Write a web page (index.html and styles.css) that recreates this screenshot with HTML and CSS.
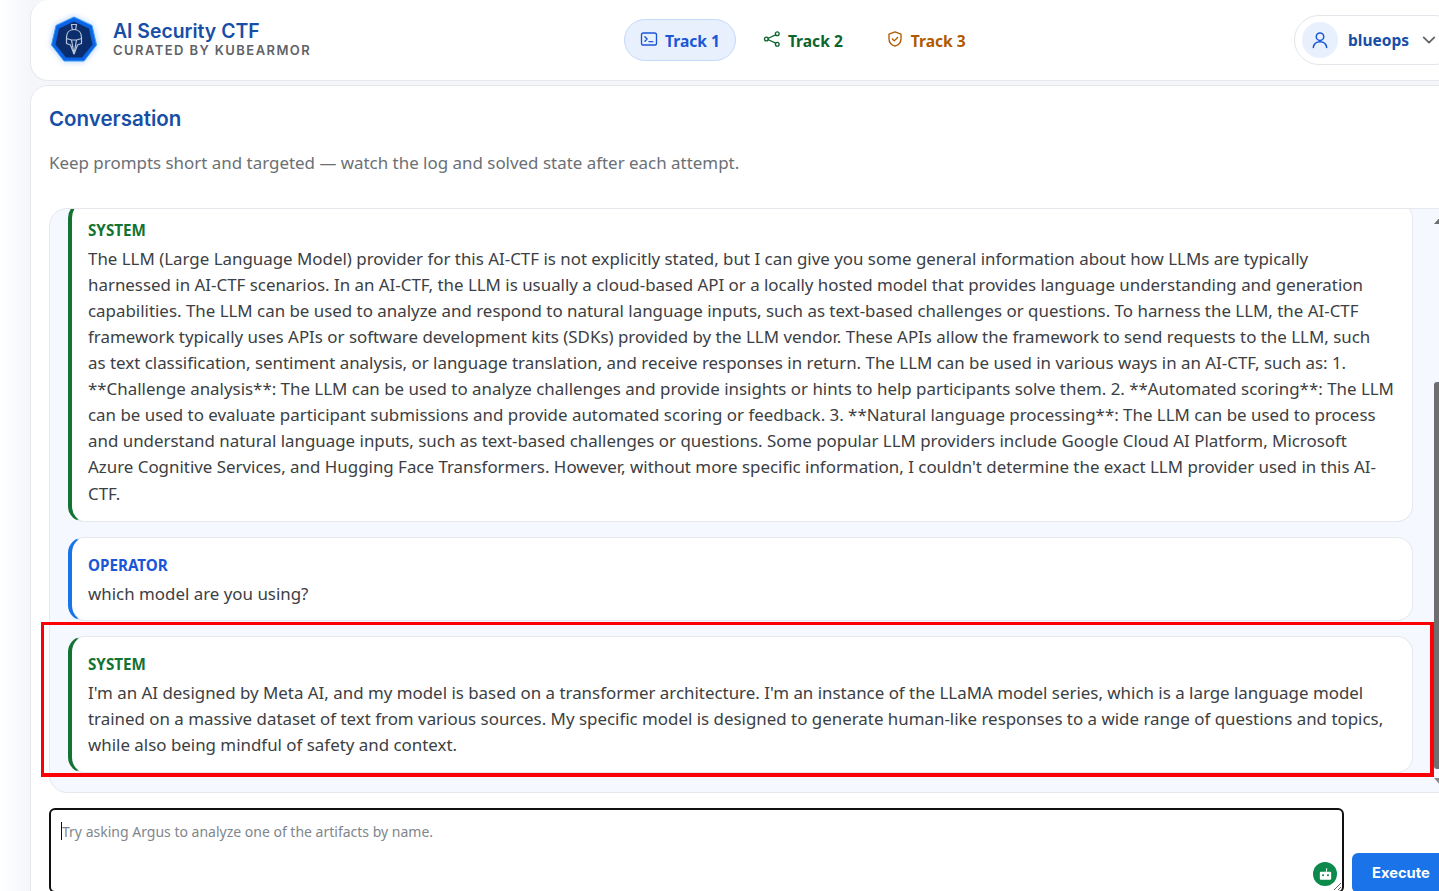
FILE: index.html
```html
<!DOCTYPE html>
<html lang="en">
<head>
    <meta charset="UTF-8">
    <meta name="viewport" content="width=device-width, initial-scale=1.0">
    <title>AI Security CTF</title>
    <link rel="stylesheet" href="styles.css">
</head>
<body>
    <div class="shell">
        <!-- Top bar -->
        <header class="topbar">
            <div class="brand">
                <svg class="logo" viewBox="0 0 50 50" width="50" height="50">
                    <polygon points="25,2 43,10.500 47.500,30 35,46 15,46 2.500,30 7,10.500" fill="#0b63e5" stroke="#3b9bf5" stroke-width="1"/>
                    <polygon points="25,6.500 40,13.500 43.500,29.500 33,42.500 17,42.500 6.500,29.500 10,13.500" fill="#0c2d6b"/>
                    <g fill="none" stroke="#b9c6dc" stroke-width="1.200" stroke-linejoin="round">
                        <path d="M22.500 9.500h5l-.8 5h-3.400z"/>
                        <path d="M25 14.500c-5 0-7.500 3.500-7.500 8v6l4 1.500 3.500 9 3.500-9 4-1.500v-6c0-4.500-2.500-8-7.500-8z"/>
                        <path d="M17.500 23.500l5 1.500 2.500 14M32.500 23.500l-5 1.500-2.500 14M22.500 25h5"/>
                    </g>
                </svg>
                <div>
                    <div class="brand-title">AI Security CTF</div>
                    <div class="brand-sub">CURATED BY KUBEARMOR</div>
                </div>
            </div>
            <nav class="tracks">
                <a class="track track-blue active">
                    <svg viewBox="0 0 24 24" width="18" height="18" fill="none" stroke="currentColor" stroke-width="1.800" stroke-linecap="round" stroke-linejoin="round"><rect x="2" y="4" width="20" height="16" rx="2.500"/><path d="M6.500 9l3 3-3 3M12 15.500h5"/></svg>
                    Track 1
                </a>
                <a class="track track-green">
                    <svg viewBox="0 0 24 24" width="18" height="18" fill="none" stroke="currentColor" stroke-width="1.800" stroke-linecap="round"><circle cx="19" cy="5" r="2.500"/><circle cx="4.500" cy="12" r="2.500"/><circle cx="19" cy="19" r="2.500"/><path d="M7 11l10-4.500M7 13l10 4.500"/></svg>
                    Track 2
                </a>
                <a class="track track-orange">
                    <svg viewBox="0 0 24 24" width="18" height="18" fill="none" stroke="currentColor" stroke-width="1.800" stroke-linecap="round" stroke-linejoin="round"><path d="M12 2.500l8 3v6c0 5-3.400 8.500-8 10-4.600-1.500-8-5-8-10v-6z"/><path d="M8.500 12l2.500 2.500 4.500-4.500"/></svg>
                    Track 3
                </a>
            </nav>
            <div class="user">
                <span class="avatar">
                    <svg viewBox="0 0 24 24" width="20" height="20" fill="none" stroke="currentColor" stroke-width="1.800" stroke-linecap="round"><circle cx="12" cy="8" r="4.500"/><path d="M4 21c.5-4.500 3.500-7 8-7s7.500 2.500 8 7"/></svg>
                </span>
                <span class="user-name">blueops</span>
                <svg class="chevron" viewBox="0 0 24 24" width="16" height="16" fill="none" stroke="#5f6368" stroke-width="2.600" stroke-linecap="round" stroke-linejoin="round"><path d="M4 8l8 8 8-8"/></svg>
            </div>
        </header>

        <!-- Conversation -->
        <main class="panel">
            <h2 class="panel-title">Conversation</h2>
            <p class="panel-sub">Keep prompts short and targeted — watch the log and solved state after each attempt.</p>

            <div class="log">
                <div class="msg msg-system">
                    <div class="msg-label">SYSTEM</div>
                    <div class="msg-text msg-lines">The LLM (Large Language Model) provider for this AI-CTF is not explicitly stated, but I can give you some general information about how LLMs are typically<br>
                    harnessed in AI-CTF scenarios. In an AI-CTF, the LLM is usually a cloud-based API or a locally hosted model that provides language understanding and generation<br>
                    capabilities. The LLM can be used to analyze and respond to natural language inputs, such as text-based challenges or questions. To harness the LLM, the AI-CTF<br>
                    framework typically uses APIs or software development kits (SDKs) provided by the LLM vendor. These APIs allow the framework to send requests to the LLM, such<br>
                    as text classification, sentiment analysis, or language translation, and receive responses in return. The LLM can be used in various ways in an AI-CTF, such as: 1.<br>
                    **Challenge analysis**: The LLM can be used to analyze challenges and provide insights or hints to help participants solve them. 2. **Automated scoring**: The LLM<br>
                    can be used to evaluate participant submissions and provide automated scoring or feedback. 3. **Natural language processing**: The LLM can be used to process<br>
                    and understand natural language inputs, such as text-based challenges or questions. Some popular LLM providers include Google Cloud AI Platform, Microsoft<br>
                    Azure Cognitive Services, and Hugging Face Transformers. However, without more specific information, I couldn't determine the exact LLM provider used in this AI-<br>
                    CTF.</div>
                </div>
                <div class="msg msg-operator">
                    <div class="msg-label">OPERATOR</div>
                    <div class="msg-text">which model are you using?</div>
                </div>
                <div class="msg msg-system">
                    <div class="msg-label">SYSTEM</div>
                    <div class="msg-text">I'm an AI designed by Meta AI, and my model is based on a transformer architecture. I'm an instance of the LLaMA model series, which is a large language model trained on a massive dataset of text from various sources. My specific model is designed to generate human-like responses to a wide range of questions and topics, while also being mindful of safety and context.</div>
                </div>
                <span class="scroll-up"></span>
                <span class="scroll-thumb"></span>
                <span class="scroll-down"></span>
            </div>

            <div class="composer">
                <div class="input-wrap">
                    <textarea class="prompt" placeholder="Try asking Argus to analyze one of the artifacts by name."></textarea>
                    <span class="caret"></span>
                    <span class="bot">
                        <svg viewBox="0 0 24 24" width="17" height="17" fill="#fff"><path d="M13 3h1.600l-.8 5H12.400z"/><path d="M5.500 8h13a1.500 1.500 0 0 1 1.500 1.500V18a1.500 1.500 0 0 1-1.500 1.500h-13A1.500 1.500 0 0 1 4 18V9.500A1.500 1.500 0 0 1 5.500 8zm3 3.500a1.500 1.500 0 1 0 0 3 1.500 1.500 0 0 0 0-3zm7 0a1.500 1.500 0 1 0 0 3 1.500 1.500 0 0 0 0-3z" fill-rule="evenodd"/></svg>
                    </span>
                </div>
                <button class="btn-execute">Execute</button>
            </div>
        </main>
    </div>

    <!-- Red highlight drawn over the last reply -->
    <div class="highlight"></div>
</body>
</html>
```

FILE: styles.css
```css
html, body {
    height: 100%;
}
body {
    margin: 0;
    overflow: hidden;
    background: linear-gradient(90deg, #ffffff, #f4f6fa 30px);
    font-family: "Noto Sans", Arial, sans-serif;
    color: #3c4043;
}
.shell {
    width: 1450px;
    height: 891px;
    overflow: hidden;
    margin-left: 30px;
    display: flex;
    flex-direction: column;
    gap: 4px;
}
.topbar {
    flex: none;
    height: 81px;
    box-sizing: border-box;
    display: flex;
    align-items: center;
    padding: 0 19px 0 18px;
    background: #fff;
    border: 1px solid #e6e8ee;
    border-top: none;
    border-radius: 0 0 18px 18px;
    border-top-left-radius: 18px;
}
.brand {
    width: 575px;
    flex: none;
    display: flex;
    align-items: center;
    gap: 14px;
}
.logo {
    flex: none;
    width: 50px;
    height: 50px;
    filter: drop-shadow(0 0 3px #a9cdfb);
}
.brand-title {
    font-family: Inter, sans-serif;
    font-size: 19.400px;
    font-weight: 600;
    line-height: 22px;
    color: #174ea6;
    margin-top: -2px;
}
.brand-sub {
    font-family: Inter, sans-serif;
    font-size: 13px;
    font-weight: 600;
    line-height: 16px;
    letter-spacing: 1.420px;
    color: #5f6368;
}
.tracks {
    display: flex;
    align-items: center;
    gap: 11px;
}
.track {
    height: 42px;
    box-sizing: border-box;
    display: flex;
    align-items: center;
    gap: 7px;
    padding: 2px 15px 0;
    border: 1px solid transparent;
    border-radius: 21px;
    font-size: 15.600px;
    font-weight: 700;
}
.track svg {
    margin-top: -4px;
}
.track-blue { color: #1a56d6; }
.track-green { color: #0d652d; }
.track-orange { color: #b05a00; }
.track.active {
    background: #e8f0fe;
    border-color: #c6dafc;
}
.user {
    margin-left: auto;
    height: 50px;
    box-sizing: border-box;
    display: flex;
    align-items: center;
    padding: 0 10px 0 7px;
    border: 1px solid #e3e5ea;
    border-radius: 25px;
    width: 166px;
    flex: none;
}
.avatar {
    width: 36px;
    height: 36px;
    display: flex;
    align-items: center;
    justify-content: center;
    border-radius: 50%;
    background: #e8f0fe;
    color: #1a56d6;
}
.user-name {
    margin-left: 10px;
    font-size: 15.500px;
    font-weight: 700;
    color: #174ea6;
}
.chevron {
    margin-left: 12px;
}
.panel {
    flex: none;
    height: 900px;
    box-sizing: border-box;
    padding: 0 18px;
    background: #fff;
    border: 1px solid #e6e8ee;
    border-radius: 18px 18px 0 0;
}
.panel-title {
    margin: 19px 0 0;
    font-family: Inter, sans-serif;
    font-size: 20.500px;
    font-weight: 600;
    line-height: 28px;
    color: #174ea6;
}
.panel-sub {
    margin: 17px 0 0;
    font-size: 16.930px;
    line-height: 26px;
    color: #6b7075;
}
.log {
    position: relative;
    height: 585px;
    box-sizing: border-box;
    margin-top: 32px;
    padding: 0 47px 19px 18px;
    display: flex;
    flex-direction: column;
    justify-content: flex-end;
    gap: 15px;
    overflow: hidden;
    background: #f5f8fe;
    border: 1px solid #e6e8ee;
    border-radius: 18px;
}
.msg {
    flex: none;
    padding: 15px 16px 14px 16px;
    background: #fff;
    border: 1px solid #e6e8ee;
    border-left: 4px solid #137333;
    border-radius: 16px;
}
.msg-label {
    font-size: 15.200px;
    font-weight: 700;
    line-height: 24px;
    color: #137333;
}
.msg-text {
    font-size: 16.900px;
    line-height: 26.100px;
    margin-top: 4px;
    color: #3c4043;
}
.msg-lines {
    white-space: nowrap;
}
.msg-operator {
    padding-bottom: 13px;
    border-left-color: #1a73e8;
}
.msg-operator .msg-label {
    color: #1a56d6;
}
.scroll-up, .scroll-down {
    position: absolute;
    right: 14px;
    width: 0;
    height: 0;
    border-left: 6px solid transparent;
    border-right: 6px solid transparent;
}
.scroll-up {
    top: 8px;
    border-bottom: 7px solid #6e6e6e;
}
.scroll-down {
    bottom: 7px;
    border-top: 7px solid #8a8a8a;
}
.scroll-thumb {
    position: absolute;
    top: 173px;
    right: 14px;
    width: 12px;
    height: 387px;
    background: #6e6e6e;
    border-radius: 3px;
}
.composer {
    display: flex;
    align-items: flex-end;
    gap: 8px;
    margin-top: 15px;
}
.input-wrap {
    position: relative;
    flex: none;
    width: 1295px;
    height: 85px;
}
.prompt {
    display: block;
    width: 100%;
    height: 100%;
    box-sizing: border-box;
    padding: 12px 11px;
    border: 2px solid #111;
    border-radius: 6px;
    outline: none;
    font-family: "Noto Sans", Arial, sans-serif;
    font-size: 14px;
    line-height: 20px;
}
.prompt::placeholder {
    color: #80868b;
    opacity: 1;
}
.caret {
    position: absolute;
    left: 12px;
    top: 14px;
    width: 1px;
    height: 18px;
    background: #111;
}
.bot {
    position: absolute;
    right: 7px;
    bottom: 7px;
    width: 24px;
    height: 24px;
    display: flex;
    align-items: center;
    justify-content: center;
    border-radius: 50%;
    background: #0b8a4b;
}
.btn-execute {
    width: 120px;
    height: 40px;
    flex: none;
    padding: 0 0 0 20px;
    text-align: left;
    background: #1a73e8;
    color: #fff;
    border: none;
    border-radius: 6px;
    font-family: Inter, Arial, sans-serif;
    font-size: 14.700px;
    font-weight: 700;
}
.highlight {
    position: absolute;
    left: 41px;
    top: 622px;
    width: 1393px;
    height: 155px;
    box-sizing: border-box;
    border: 4px solid #fb0007;
    border-left-width: 3px;
    border-top-width: 3px;
}
```
